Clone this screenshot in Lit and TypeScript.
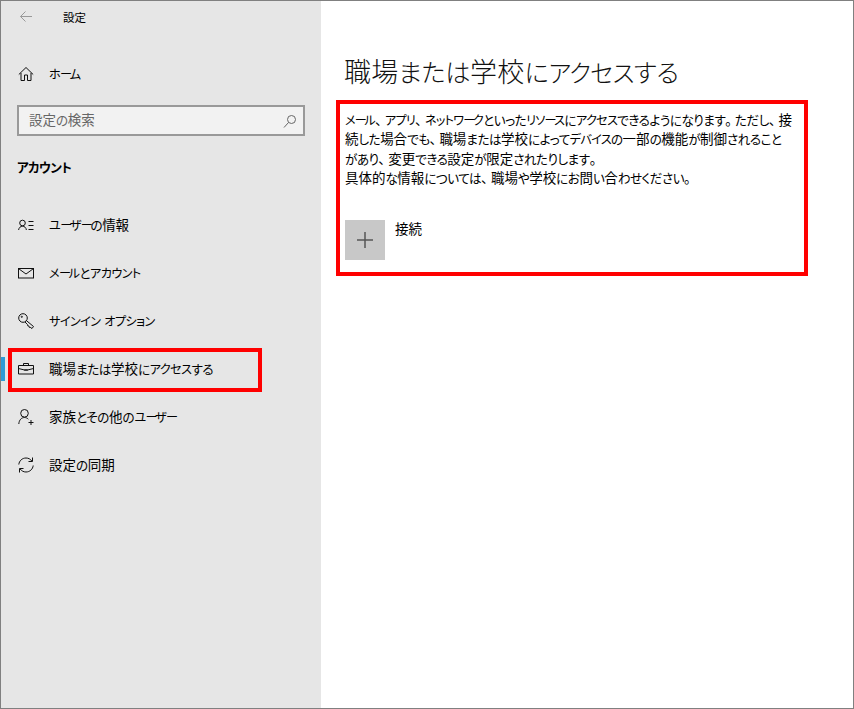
import { LitElement, html, css, svg } from "lit";
import { customElement } from "lit/decorators.js";

const icon = (body: unknown) => html`<svg class="ic" viewBox="0 0 16 16" fill="none" stroke="#111" stroke-width="1">${body}</svg>`;

const icons: Record<string, unknown> = {
  user: svg`<circle cx="4.500" cy="6" r="2.800"/><path d="M.6 13c.3-2.300 1.900-3.800 3.900-3.800s3.600 1.500 3.900 3.800"/><path d="M10.500 4.500h5M10.500 8.500h5M10.500 12.500h5"/>`,
  mail: svg`<rect x=".5" y="3.500" width="15" height="9.500"/><path d="M.8 3.800 8 9l7.200-5.200"/>`,
  key: svg`<circle cx="5" cy="5" r="4.300"/><circle cx="3.800" cy="3.800" r=".6"/><path d="m8.300 7.500 7.200 6-1.500 2-1.800-1.200-.8.200-.4-1.400-1.200-.2-.3-1.300L7 9"/>`,
  work: svg`<path d="M.5 4.500h15v8.500H.5z"/><path d="M5.500 4.500v-2h5v2"/><path d="M.5 7.500 6.500 9M9.500 9l6-1.500"/><path d="M6.500 8.500h3v1h-3z" stroke-width=".8"/>`,
  family: svg`<circle cx="6.500" cy="4.300" r="3.800"/><path d="M.8 15c.3-4 2.600-6.500 5.700-6.500 1.500 0 2.800.6 3.800 1.700"/><path d="M10.500 13.500h5M13 11v5"/>`,
  sync: svg`<path d="M.8 7.500C1.200 3.800 4.200 1 8 1c2.400 0 4.500 1.100 5.800 3"/><path d="M14.500.5v4h-4"/><path d="M15.200 8.500c-.4 3.700-3.400 6.500-7.200 6.500-2.400 0-4.500-1.100-5.800-3"/><path d="M1.500 15.500v-4h4"/>`,
};

const nav = [
  { k: "user", t: "ユーザーの情報" },
  { k: "mail", t: "メールとアカウント" },
  { k: "key", t: "サインイン オプション" },
  { k: "work", t: "職場または学校にアクセスする", active: true },
  { k: "family", t: "家族とその他のユーザー" },
  { k: "sync", t: "設定の同期" },
];

/* The reference face has wider kanji and narrower kana than Noto, so each script gets its own size. */
const jp = (text: string) =>
  text.match(/[ぁ-ゟ]+|[ァ-ヺ ]+|ー|[、。]|[^ぁ-ヿ 、。]+/g)!.map((run) => {
    if (/^[、。]$/.test(run)) return html`<span class="p">${run}</span>`;
    if (run === "ー") return html`<span class="l">${run}</span>`;
    if (/^[ぁ-ゟ]/.test(run)) return html`<span class="h">${run}</span>`;
    if (/^[ァ-ヺ ]/.test(run)) return html`<span class="k">${run}</span>`;
    return run;
  });

@customElement("app-root")
export class AppRoot extends LitElement {
  static styles = css`
    :host {
      display: block;
      width: 854px;
      height: 709px;
      font-family: "Noto Sans CJK JP", "Noto Sans", sans-serif;
      font-feature-settings: "palt";
      color: #000;
    }
    .h { font-size: 0.933em; letter-spacing: -0.03em; }
    .k { font-size: 0.9em; letter-spacing: -0.05em; word-spacing: 0.15em; }
    .l { font-size: 0.9em; letter-spacing: -0.2em; }
    .p { letter-spacing: 0.22em; }
    p .h { letter-spacing: -0.04em; }
    p .k { letter-spacing: -0.058em; }
    h1 .h { letter-spacing: -0.01em; }
    h1 .k { letter-spacing: -0.03em; }
    .win {
      box-sizing: border-box;
      width: 854px;
      height: 709px;
      border: 1px solid #808080;
      display: flex;
      background: #fff;
    }
    .side {
      width: 320px;
      flex: none;
      background: #e6e6e6;
      display: flex;
      flex-direction: column;
    }
    .top {
      height: 32px;
      display: flex;
      align-items: center;
      padding-left: 17px;
      margin-bottom: 17px;
      font-size: 11.500px;
    }
    .back { width: 16px; height: 16px; flex: none; margin-right: 29px; }
    .row {
      position: relative;
      height: 48px;
      flex: none;
      display: flex;
      align-items: center;
      padding-left: 17px;
      font-size: 13.500px;
      white-space: nowrap;
    }
    .row .label { margin-top: -2px; }
    .ic { width: 16px; height: 16px; flex: none; margin-right: 15px; }
    .search {
      box-sizing: border-box;
      margin: 7px 0 0 16px;
      width: 288px;
      height: 31px;
      border: 2px solid #999;
      background: #f2f2f2;
      display: flex;
      align-items: center;
      justify-content: space-between;
      padding: 0 5px 0 10px;
      font-size: 13.500px;
      color: #666;
    }
    .search span { margin-top: -3px; }
    .search svg { width: 16px; height: 16px; }
    .section {
      height: 20px;
      line-height: 18px;
      margin: 21px 0 24px 16px;
      font-size: 14px;
      font-weight: 700;
    }
    .mark {
      position: absolute;
      left: 0;
      top: 12px;
      width: 4px;
      height: 24px;
      background: #2f9bd6;
    }
    .hl {
      position: absolute;
      box-sizing: border-box;
      left: 7px;
      top: 3px;
      width: 254px;
      height: 44px;
      border: 4px solid #f00;
    }
    .main { flex: 1; min-width: 0; }
    h1 {
      margin: 50px 0 9px 23px;
      height: 40px;
      line-height: 40px;
      font-size: 27px;
      font-weight: 300;
      letter-spacing: 0.2px;
      white-space: nowrap;
      color: #111;
    }
    .box {
      box-sizing: border-box;
      margin-left: 15px;
      width: 472px;
      height: 176px;
      border: 4px solid #f00;
      padding: 6px 0 0 5px;
    }
    p {
      margin: 0;
      font-size: 13.500px;
      line-height: 19.300px;
      white-space: nowrap;
    }
    .conn {
      margin-top: 33px;
      display: flex;
      gap: 10px;
      font-size: 13.500px;
      line-height: 16px;
    }
    .plus {
      width: 40px;
      height: 40px;
      background: #c8c8c8;
      display: flex;
      align-items: center;
      justify-content: center;
    }
    .plus svg { width: 16px; height: 16px; }
  `;

  render() {
    return html`<div class="win">
      <aside class="side">
        <div class="top">
          <svg class="back" viewBox="0 0 16 16" fill="none" stroke="#999" stroke-width="1">
            <path d="M2.500 7.500H14M7.500 2.500l-5 5 5 5" />
          </svg>
          <span>設定</span>
        </div>
        <div class="row">
          ${icon(svg`<path d="M.8 8.500 8 1.500l7.200 7"/><path d="M3 7v7.500h3.500V9h3v5.500H13V7"/>`)}<span class="label">${jp("ホーム")}</span>
        </div>
        <div class="search">
          <span>${jp("設定の検索")}</span>
          <svg viewBox="0 0 16 16" fill="none" stroke="#666" stroke-width="1">
            <circle cx="9.500" cy="6.500" r="4" /><path d="M6.500 9.500 2 14.500" />
          </svg>
        </div>
        <div class="section">${jp("アカウント")}</div>
        ${nav.map(
          (n) => html`<div class="row">
            ${n.active ? html`<i class="mark"></i><i class="hl"></i>` : ""}
            ${icon(icons[n.k])}<span class="label">${jp(n.t)}</span>
          </div>`
        )}
      </aside>
      <main class="main">
        <h1>${jp("職場または学校にアクセスする")}</h1>
        <section class="box">
          <p>
            ${jp("メール、アプリ、ネットワークといったリソースにアクセスできるようになります。ただし、接")}<br />${jp("続した場合でも、職場または学校によってデバイスの一部の機能が制御されること")}<br />${jp("があり、変更できる設定が限定されたりします。")}<br />${jp("具体的な情報については、職場や学校にお問い合わせください。")}
          </p>
          <div class="conn">
            <div class="plus">
              <svg viewBox="0 0 16 16" fill="none" stroke="#555" stroke-width="1.500"><path d="M0 8h16M8 0v16" /></svg>
            </div>
            <span>${jp("接続")}</span>
          </div>
        </section>
      </main>
    </div>`;
  }
}
